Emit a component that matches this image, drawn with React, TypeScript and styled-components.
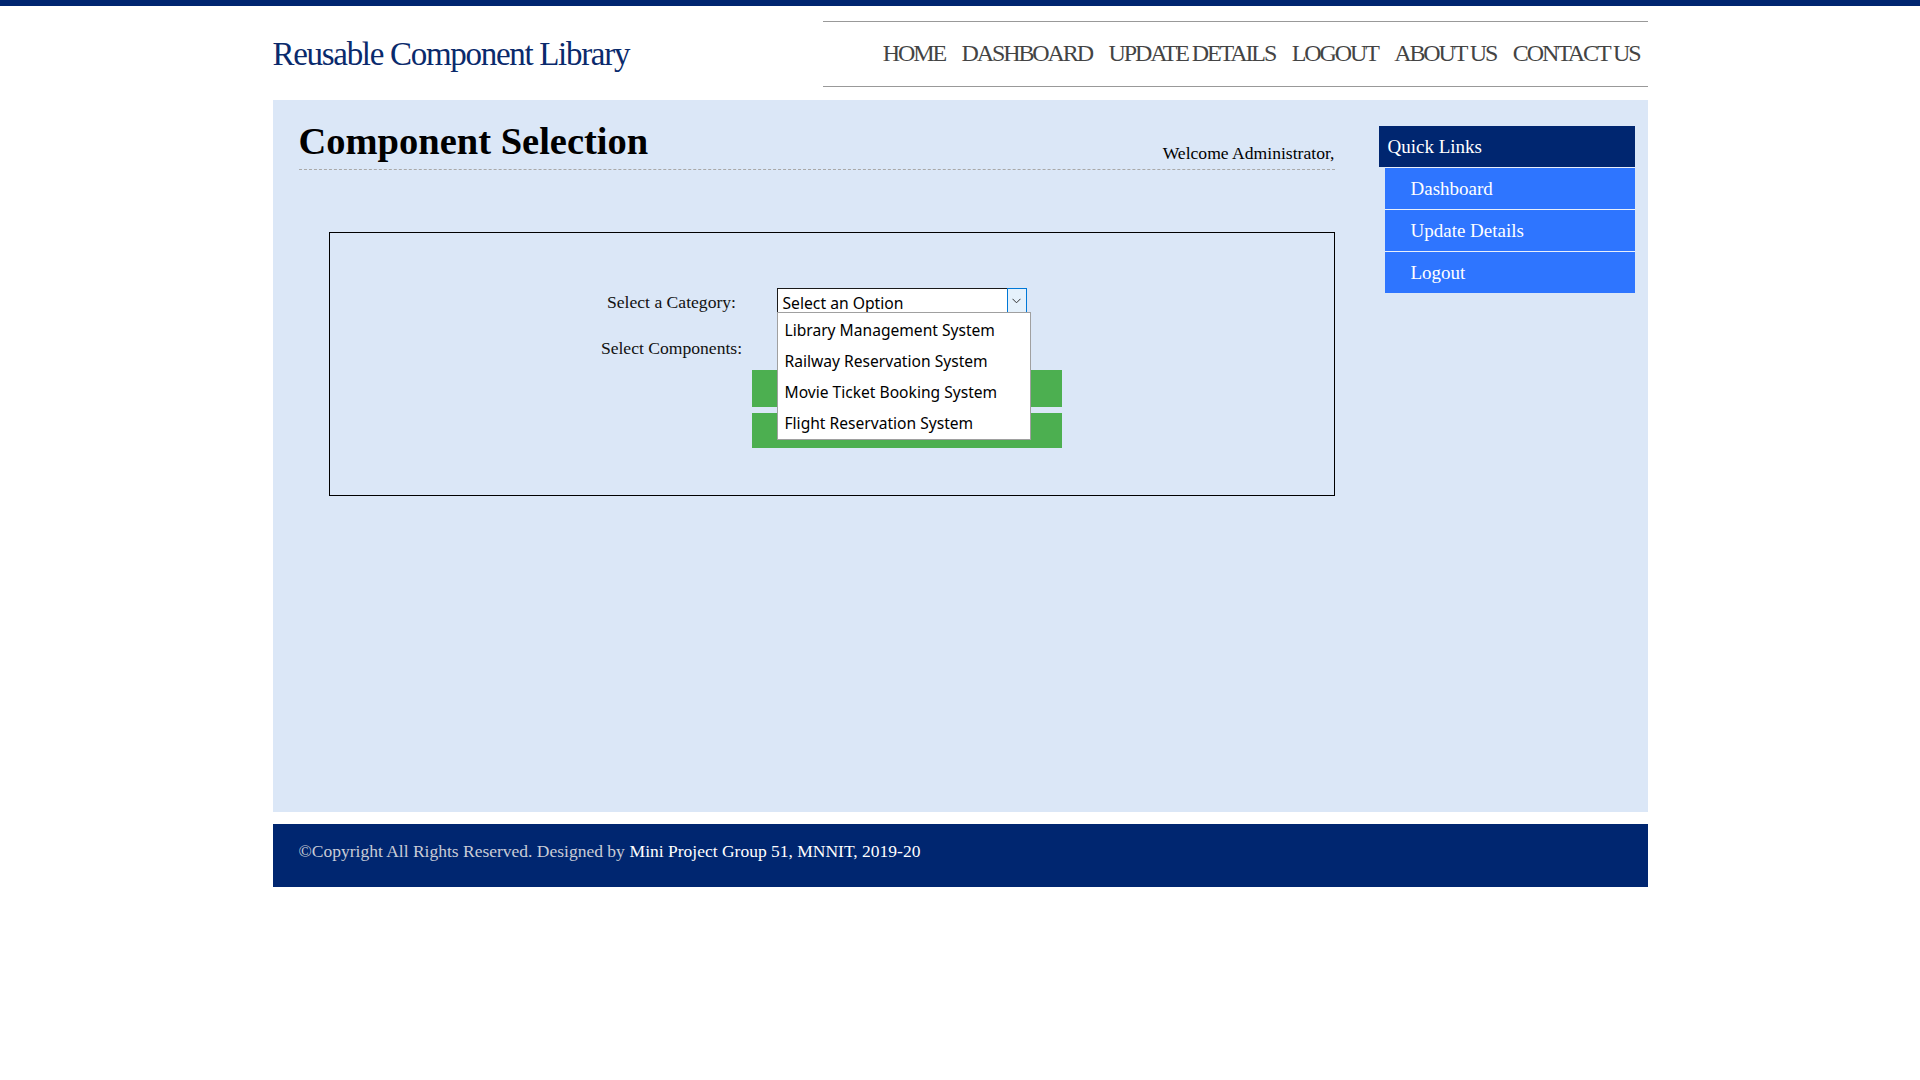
import styled, { createGlobalStyle } from 'styled-components';

const GlobalStyle = createGlobalStyle`
  html, body {
    margin: 0;
    padding: 0;
    background: #ffffff;
    font-family: "Liberation Serif", "Times New Roman", serif;
  }
`;

const navItems = ['HOME', 'DASHBOARD', 'UPDATE DETAILS', 'LOGOUT', 'ABOUT US', 'CONTACT US'];
const quickLinks = ['Dashboard', 'Update Details', 'Logout'];
const categories = [
  'Library Management System',
  'Railway Reservation System',
  'Movie Ticket Booking System',
  'Flight Reservation System',
];

const App = () => (
  <>
    <GlobalStyle />
    <TopBar />
    <Wrapper>
      <Header>
        <Logo>Reusable Component Library</Logo>
        <Nav>
          {navItems.map((item) => (
            <NavLink key={item}>{item}</NavLink>
          ))}
        </Nav>
      </Header>

      <Main>
        <Content>
          <TitleRow>
            <Title>Component Selection</Title>
            <Welcome>Welcome Administrator,</Welcome>
          </TitleRow>

          <FormBox>
            <FormGrid>
              <Label $shift={5}>Select a Category:</Label>
              <SelectWrap>
                <SelectBox>
                  <SelectText>Select an Option</SelectText>
                  <ArrowButton>
                    <svg width="9" height="6" viewBox="0 0 9 6">
                      <polyline points="0.5,0.8 4.5,4.8 8.5,0.8" fill="none" stroke="#333" strokeWidth="1" />
                    </svg>
                  </ArrowButton>
                </SelectBox>
                <Dropdown>
                  {categories.map((c) => (
                    <Option key={c}>{c}</Option>
                  ))}
                </Dropdown>
              </SelectWrap>
              <Label $shift={5}>Select Components:</Label>
              <EmptyCell />
            </FormGrid>
            <ButtonStack>
              <GreenButton $h={37}>Show Components</GreenButton>
              <GreenButton $h={35}>Get Components</GreenButton>
            </ButtonStack>
          </FormBox>
        </Content>

        <Sidebar>
          <QuickHeader>Quick Links</QuickHeader>
          <LinkList>
            {quickLinks.map((l) => (
              <QuickLink key={l}>{l}</QuickLink>
            ))}
          </LinkList>
        </Sidebar>
      </Main>

      <Footer>
        <FooterMuted>©Copyright All Rights Reserved. Designed by </FooterMuted>
        <FooterStrong>&nbsp;Mini Project Group 51, MNNIT, 2019-20</FooterStrong>
      </Footer>
    </Wrapper>
  </>
);

export default App;

const TopBar = styled.div`
  height: 6px;
  background: #002670;
`;
const Wrapper = styled.div`
  width: 1375px;
  margin: 0 auto;
`;
const Header = styled.div`
  display: flex;
  align-items: flex-start;
  padding-top: 15px;
  margin-bottom: 13px;
`;
const Logo = styled.div`
  width: 40%;
  margin-top: 14px;
  font-size: 33px;
  line-height: 38px;
  letter-spacing: -1.3px;
  color: #0a2a6c;
`;
const Nav = styled.div`
  width: 60%;
  height: 64px;
  display: flex;
  justify-content: flex-end;
  align-items: center;
  border-top: 1px solid #999;
  border-bottom: 1px solid #999;
  padding-right: 0;
  box-sizing: content-box;
`;
const NavLink = styled.a`
  font-size: 24px;
  letter-spacing: -2.1px;
  color: #444;
  padding: 0 8px 0 8.5px;
  margin-top: -1px;
  cursor: pointer;
`;
const Main = styled.div`
  display: flex;
  height: 712px;
  box-sizing: border-box;
  padding: 19.5px 13px 0 26px;
  background: #dbe7f7;
`;
const Content = styled.div`
  flex: 1;
  display: flex;
  flex-direction: column;
`;
const TitleRow = styled.div`
  display: flex;
  justify-content: space-between;
  align-items: flex-end;
  border-bottom: 1px dashed #a9a9a9;
  padding-bottom: 6.5px;
`;
const Title = styled.h1`
  margin: 0;
  padding-bottom: 1px;
  font-size: 38.5px;
  font-weight: 700;
  line-height: 42px;
  color: #000;
`;
const Welcome = styled.div`
  font-size: 17.6px;
  color: #000;
  margin-bottom: -1.5px;
`;
const FormBox = styled.div`
  margin: 62px 0 0 30px;
  height: 264px;
  box-sizing: border-box;
  border: 1px solid #000;
  padding: 55px 0 0 267px;
`;
const FormGrid = styled.div`
  display: grid;
  grid-template-columns: 150px 254px;
  grid-template-rows: 24px 24px;
  column-gap: 30px;
  row-gap: 22px;
  align-items: center;
`;
const Label = styled.div<{ $shift: number }>`
  font-size: 17.6px;
  color: #111;
  text-align: center;
  white-space: nowrap;
  padding-top: ${(p) => p.$shift}px;
`;
const SelectWrap = styled.div`
  position: relative;
  width: 250px;
  height: 24px;
  z-index: 2;
`;
const SelectBox = styled.div`
  position: relative;
  height: 24px;
  box-sizing: border-box;
  border: 1px solid #1a1a1a;
  border-bottom: none;
  background: #fff;
  display: flex;
  align-items: center;
  padding-left: 5px;
`;
const SelectText = styled.span`
  font-family: "Noto Sans", "Open Sans", sans-serif;
  font-size: 15.7px;
  color: #000;
  margin-top: 4px;
`;
const ArrowButton = styled.div`
  position: absolute;
  top: -1px;
  right: -1px;
  width: 20px;
  height: 24px;
  box-sizing: border-box;
  border: 1px solid #0078d7;
  border-bottom: none;
  background: #e5f1fb;
  display: flex;
  align-items: center;
  justify-content: center;
`;
const Dropdown = styled.div`
  position: absolute;
  top: 24px;
  left: 0;
  width: 254px;
  box-sizing: border-box;
  border: 1px solid #a0a0a0;
  background: #fff;
  padding: 2px 0 0;
`;
const Option = styled.div`
  height: 31px;
  line-height: 31px;
  padding-left: 7px;
  font-family: "Noto Sans", "Open Sans", sans-serif;
  font-size: 15.6px;
  color: #000;
  white-space: nowrap;
`;
const EmptyCell = styled.div``;
const ButtonStack = styled.div`
  display: flex;
  flex-direction: column;
  gap: 6px;
  width: 310px;
  margin: 12px 0 0 155px;
`;
const GreenButton = styled.button<{ $h: number }>`
  height: ${(p) => p.$h}px;
  border: none;
  background: #4caf50;
  color: #fff;
  font-family: "Liberation Serif", serif;
  font-size: 17px;
  cursor: pointer;
`;
const Sidebar = styled.div`
  width: 256px;
  margin: 6.5px 0 0 44px;
`;
const QuickHeader = styled.div`
  height: 41px;
  line-height: 41px;
  padding-left: 9px;
  background: #002670;
  color: #fff;
  font-size: 19px;
`;
const LinkList = styled.div`
  margin-left: 6px;
`;
const QuickLink = styled.a`
  display: block;
  height: 41px;
  line-height: 41px;
  border-top: 1px solid #e8effc;
  padding-left: 26px;
  background: #2e75ff;
  color: #fff;
  font-size: 19px;
  cursor: pointer;
`;
const Footer = styled.div`
  margin-top: 12px;
  height: 63px;
  box-sizing: border-box;
  display: flex;
  align-items: center;
  padding: 0 0 8px 26px;
  background: #002670;
  font-size: 17.5px;
`;
const FooterMuted = styled.span`
  color: #c9ccd6;
  white-space: pre;
`;
const FooterStrong = styled.span`
  color: #fff;
  margin-left: -4px;
`;
